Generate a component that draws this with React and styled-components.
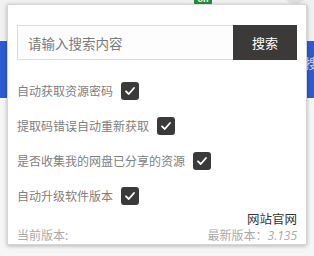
import React from 'react';
import styled, { createGlobalStyle } from 'styled-components';

const Global = createGlobalStyle`
  html, body { margin: 0; padding: 0; }
  body { font-family: "Noto Sans CJK SC", "Noto Sans", sans-serif; }
`;

const Page = styled.div`
  position: relative;
  width: 314px;
  height: 256px;
  overflow: hidden;
  box-sizing: border-box;
  padding: 4px 7px 0;
  background: linear-gradient(
    to bottom,
    #f1f1f1 0,
    #f1f1f1 41px,
    #2d5bd2 41px,
    #2d5bd2 98px,
    #f6f6f6 98px
  );
`;

const Badge = styled.span`
  position: absolute;
  left: 194px;
  top: -7px;
  width: 18px;
  height: 12px;
  border-radius: 2px;
  background: #1f8f3e;
  color: #fff;
  font: bold 9px/12px "Liberation Sans", sans-serif;
  text-align: center;
`;

const Circle = styled.span`
  position: absolute;
  left: 284px;
  top: -18px;
  width: 22px;
  height: 22px;
  border-radius: 50%;
  background: #e0e0e0;
`;

const BackText = styled.span`
  position: absolute;
  left: 305px;
  top: 55px;
  color: #dcd4ff;
  font-size: 13px;
  line-height: 16px;
`;

const Popup = styled.div`
  position: relative;
  width: 300px;
  height: 241px;
  box-sizing: border-box;
  background: #fff;
  border: 1px solid #d6d6d6;
  box-shadow: 0 1px 4px rgba(0, 0, 0, 0.28);
  padding: 20px 9px 0;
`;

const SearchBar = styled.div`
  display: flex;
  height: 35px;
`;

const SearchInput = styled.input`
  flex: 1;
  min-width: 0;
  box-sizing: border-box;
  height: 35px;
  border: 1px solid #dcdcdc;
  border-right: none;
  background: #fdfdfd;
  padding: 0 10px;
  font-family: "Noto Sans CJK SC", sans-serif;
  font-size: 13.5px;
  color: #333;
  outline: none;
  &::placeholder { color: #7a7a7a; }
`;

const SearchButton = styled.button`
  width: 64px;
  height: 35px;
  border: none;
  background: #3c3a38;
  color: #fff;
  font-family: "Noto Sans CJK SC", sans-serif;
  font-size: 13px;
  padding: 0;
`;

const Options = styled.div`
  margin-top: 13px;
  display: flex;
  flex-direction: column;
`;

const Option = styled.label`
  display: flex;
  align-items: center;
  gap: 8px;
  height: 35px;
  font-size: 12px;
  color: #808080;
`;

const Box = styled.span`
  display: inline-flex;
  align-items: center;
  justify-content: center;
  width: 18px;
  height: 18px;
  border-radius: 3px;
  background: ${({ checked }) => (checked ? '#3a3a3a' : '#fff')};
`;

const LinkLine = styled.div`
  margin-top: -2px;
  text-align: right;
  font-size: 12.5px;
  line-height: 15px;
  color: #333;
`;

const VersionRow = styled.div`
  display: flex;
  justify-content: space-between;
  margin-top: 1px;
  font-size: 12px;
  line-height: 16px;
  color: #aaa;
`;

const Num = styled.span`
  font-family: "Open Sans", "Liberation Sans", sans-serif;
  font-style: italic;
`;

const Check = ({ checked = true }) => (
  <Box checked={checked}>
    <svg width="12" height="12" viewBox="0 0 12 12">
      <polyline points="2,6.3 4.8,9 10,3" fill="none" stroke="#fff" strokeWidth="1.8" strokeLinecap="round" strokeLinejoin="round" />
    </svg>
  </Box>
);

const options = [
  '自动获取资源密码',
  '提取码错误自动重新获取',
  '是否收集我的网盘已分享的资源',
  '自动升级软件版本',
];

export default function App() {
  return (
    <>
      <Global />
      <Page>
        <Badge>on</Badge>
        <Circle />
        <BackText>搜</BackText>
        <Popup>
          <SearchBar>
            <SearchInput placeholder="请输入搜索内容" />
            <SearchButton>搜索</SearchButton>
          </SearchBar>
          <Options>
            {options.map((o) => (
              <Option key={o}>
                {o}
                <Check />
              </Option>
            ))}
          </Options>
          <LinkLine>网站官网</LinkLine>
          <VersionRow>
            <span>当前版本:</span>
            <span>最新版本：<Num>3.135</Num></span>
          </VersionRow>
        </Popup>
      </Page>
    </>
  );
}
